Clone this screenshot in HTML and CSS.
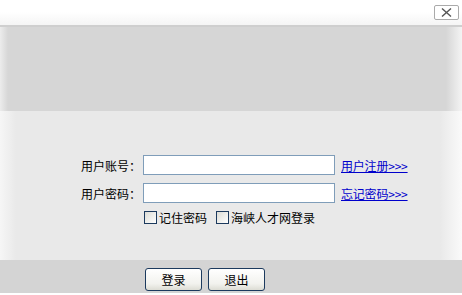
FILE: index.html
```html
<!DOCTYPE html>
<html lang="zh-CN">
<head>
  <meta charset="UTF-8">
  <title>用户登录</title>
  <link rel="stylesheet" href="styles.css">
</head>
<body>

<div class="top">
  <span class="close">
    <svg width="11" height="9" viewBox="0 0 11 9"><path d="M1 0.5 L10 8.5 M10 0.5 L1 8.5" stroke="#555" stroke-width="1.4"/></svg>
  </span>
</div>
<div class="banner"></div>

<div class="main">
  <div class="row">
    <label class="label">用户账号：</label>
    <input class="text" type="text">
    <a href="#" class="link">用户注册&gt;&gt;&gt;</a>
  </div>
  <div class="row">
    <label class="label">用户密码：</label>
    <input class="text" type="password">
    <a href="#" class="link">忘记密码&gt;&gt;&gt;</a>
  </div>
  <div class="checks">
    <span class="box"></span><span class="check-text">记住密码</span>
    <span class="box second"></span><span class="check-text">海峡人才网登录</span>
  </div>
</div>

<div class="foot">
  <button class="btn">登录</button>
  <button class="btn">退出</button>
</div>

</body>
</html>
```

FILE: styles.css
```css
body {
  margin: 0;
  width: 462px;
  height: 295px;
  overflow: hidden;
  font-family: "Noto Sans CJK SC", "Liberation Sans", sans-serif;
  font-size: 12px;
  color: #000;
  background: #fff;
}

.top {
  height: 27px;
  box-sizing: border-box;
  padding: 5px 3px 0 0;
  display: flex;
  justify-content: flex-end;
  background: linear-gradient(to bottom, #fff 0, #fff 12px, #f3f3f3 27px);
  border-bottom: 2px solid #cfcfcf;
}

.close {
  width: 23px;
  height: 13px;
  border: 1px solid #aaa;
  border-radius: 2px;
  background: #fff;
  display: flex;
  align-items: center;
  justify-content: center;
}

.banner {
  height: 84px;
  background: linear-gradient(to right, #ececec 0, #d6d6d6 8px, #d6d6d6 446px, #f4f4f4 462px);
}

.main {
  height: 149px;
  box-sizing: border-box;
  padding: 44px 0 0 81px;
  background: linear-gradient(to right, #f6f6f6 0, #e9e9e9 16px, #e9e9e9 440px, #fafafa 462px);
}

.row {
  display: flex;
  align-items: center;
  height: 20px;
  margin-bottom: 8px;
}

.label {
  width: 62px;
}

.text {
  width: 192px;
  height: 20px;
  box-sizing: border-box;
  margin: 0;
  border: 1px solid #7f9db9;
  background: #fff;
}

.link {
  margin-left: 6px;
  letter-spacing: -0.2px;
  color: #0000cc;
  text-decoration: underline;
}

.checks {
  display: flex;
  align-items: center;
  padding-left: 63px;
  height: 14px;
  margin-top: -1px;
}

.box {
  width: 11px;
  height: 11px;
  border: 1px solid #1c3a5e;
  background: linear-gradient(135deg, #dcdcd6, #fff);
  margin-right: 2px;
}

.box.second {
  margin-left: 9px;
}

.foot {
  height: 33px;
  box-sizing: border-box;
  padding: 8px 0 0 145px;
  display: flex;
  gap: 6px;
  background: #d4d4d4;
}

.btn {
  width: 57px;
  height: 23px;
  margin: 0;
  padding: 0;
  font-family: inherit;
  font-size: 12px;
  border: 1px solid #1c3a5e;
  border-radius: 3px;
  background: linear-gradient(to bottom, #fff, #f2f2ee 70%, #dcdcd4);
}
```
